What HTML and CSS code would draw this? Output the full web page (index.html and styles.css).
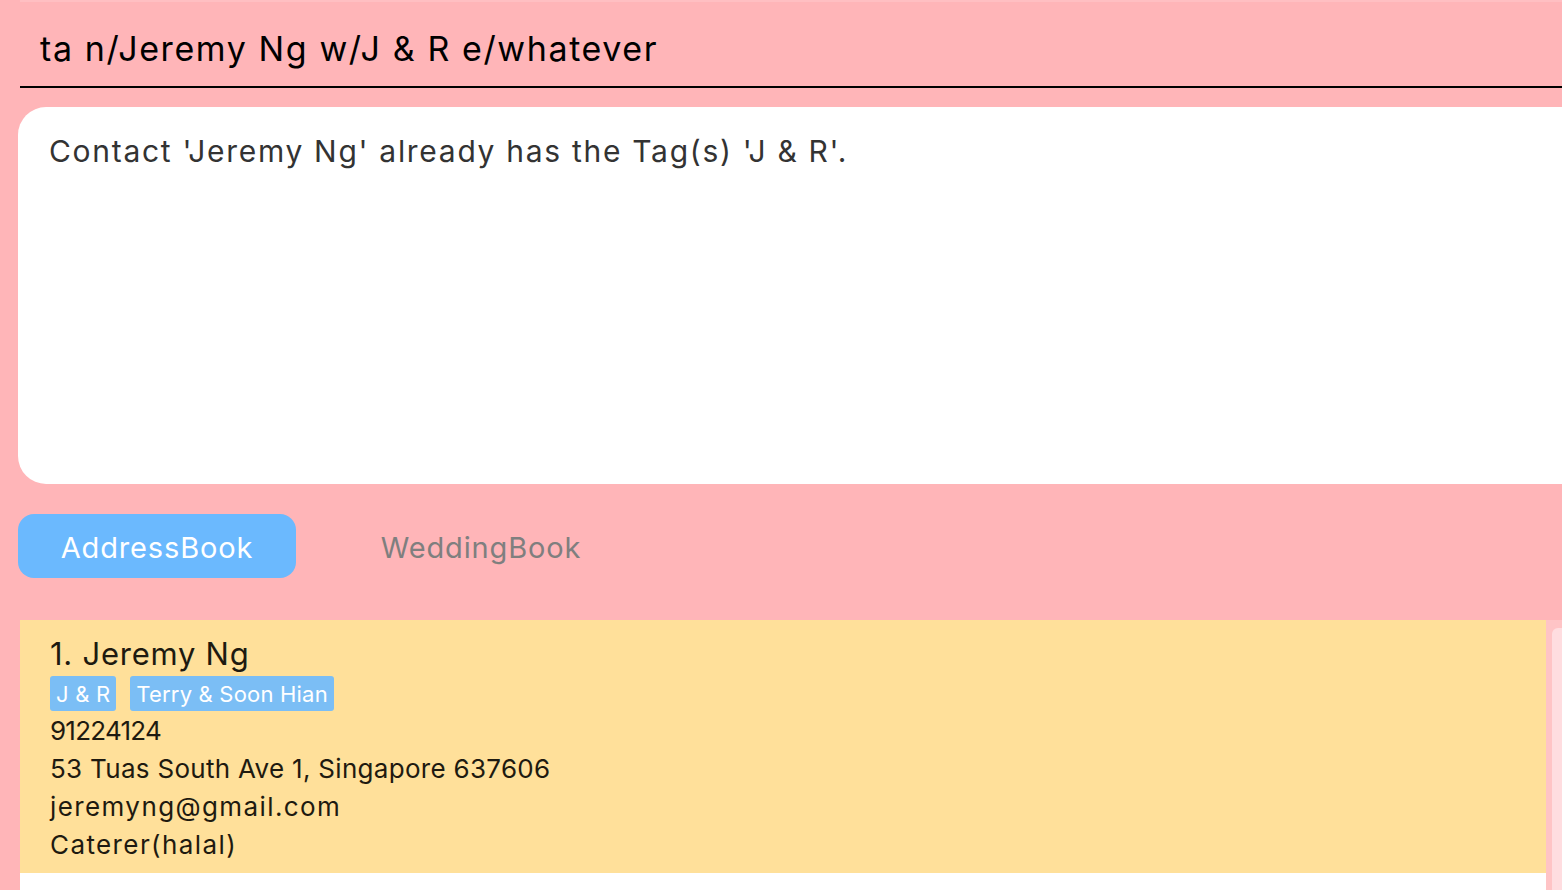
FILE: index.html
```html
<!DOCTYPE html>
<html>
<head>
<meta charset="utf-8">
<link rel="stylesheet" href="styles.css">
</head>
<body>
<div class="app">
  <div class="command">
    <div class="command-text">ta n/Jeremy Ng w/J &amp; R e/whatever</div>
  </div>
  <div class="result">
    <div class="result-text">Contact 'Jeremy Ng' already has the Tag(s) 'J &amp; R'.</div>
  </div>
  <div class="tabs">
    <div class="tab tab-active">AddressBook</div>
    <div class="tab">WeddingBook</div>
  </div>
  <div class="list-area">
    <div class="list">
      <div class="card">
        <div class="card-name">1. Jeremy Ng</div>
        <div class="tags">
          <span class="tag">J &amp; R</span>
          <span class="tag">Terry &amp; Soon Hian</span>
        </div>
        <div class="field field-phone">91224124</div>
        <div class="field">53 Tuas South Ave 1, Singapore 637606</div>
        <div class="field field-wide">jeremyng@gmail.com</div>
        <div class="field field-wide">Caterer(halal)</div>
      </div>
    </div>
    <div class="scrollbar"><div class="thumb"></div></div>
  </div>
</div>
</body>
</html>
```

FILE: styles.css
```css
html, body {
  margin: 0;
  padding: 0;
  width: 1562px;
  height: 890px;
  overflow: hidden;
  background: #ffb5b8;
  font-family: Inter, "Open Sans", sans-serif;
}
.app {
  display: flex;
  flex-direction: column;
  width: 1562px;
  height: 890px;
}
.command {
  margin-left: 20px;
  height: 88px;
  border-bottom: 2px solid #000;
  border-top: 2px solid #ffbfc2;
  display: flex;
  align-items: center;
  padding-left: 20px;
  padding-top: 8px;
  box-sizing: border-box;
}
.command-text {
  font-size: 34px;
  color: #000;
  letter-spacing: 1.6px;
}
.result {
  margin-top: 19px;
  margin-left: 18px;
  width: 1570px;
  height: 377px;
  background: #fff;
  border-radius: 28px;
  flex-shrink: 0;
  box-sizing: border-box;
  padding: 26px 0 0 31px;
}
.result-text {
  font-size: 30px;
  color: #333;
  letter-spacing: 1.7px;
}
.tabs {
  display: flex;
  margin-top: 30px;
  margin-left: 18px;
  gap: 46px;
}
.tab {
  width: 278px;
  height: 64px;
  display: flex;
  align-items: center;
  justify-content: center;
  font-size: 29px;
  letter-spacing: 0.85px;
  color: #7f7f7f;
  border-radius: 16px;
  padding-top: 2px;
  box-sizing: border-box;
}
.tab-inactive {
  letter-spacing: 1.1px;
}
.tab-active {
  background: #6bb9fe;
  color: #fff;
}
.list-area {
  margin-top: 42px;
  display: flex;
  flex: 1;
  margin-left: 20px;
}
.list {
  width: 1526px;
  background: #fff;
}
.card {
  background: #ffe09a;
  height: 253px;
  box-sizing: border-box;
  padding: 13px 0 0 30px;
  color: #1e1a10;
}
.card-name {
  font-size: 31px;
  line-height: 41px;
  letter-spacing: 0.75px;
}
.tags {
  display: flex;
  gap: 14px;
  margin-top: 2px;
  margin-bottom: 1px;
}
.tag {
  background: #7bbef5;
  color: #fff;
  font-size: 22px;
  height: 35px;
  line-height: 36px;
  padding: 0 6px;
  letter-spacing: 0.2px;
  border-radius: 3px;
}
.field {
  font-size: 26px;
  line-height: 38px;
  letter-spacing: 0.3px;
}
.field-phone {
  letter-spacing: -0.75px;
}
.field-wide {
  letter-spacing: 1.4px;
}
.scrollbar {
  width: 16px;
  background: #ffc4c6;
  padding: 8px 0 0 6px;
  box-sizing: border-box;
}
.thumb {
  height: 100%;
  background: #ffdde0;
  border-radius: 6px 0 0 0;
}
```
